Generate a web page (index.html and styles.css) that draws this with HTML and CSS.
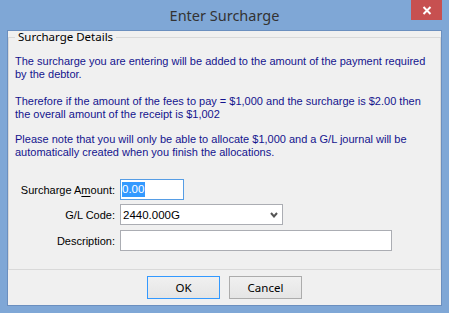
FILE: index.html
```html
<!DOCTYPE html>
<html>
<head>
<meta charset="utf-8">
<link rel="stylesheet" href="styles.css">
</head>
<body>
<div class="window">
  <div class="titlebar">
    <div class="tb-left"></div>
    <div class="title">Enter Surcharge</div>
    <div class="tb-right">
      <div class="close">
        <svg width="10" height="9" viewBox="0 0 10 9"><path d="M1.5 1 L8.5 8 M8.5 1 L1.5 8" stroke="#fff" stroke-width="2" fill="none"/></svg>
      </div>
    </div>
  </div>
  <div class="client">
    <fieldset class="group">
      <legend class="group-title">Surcharge Details</legend>
      <p class="msg m1">The surcharge you are entering will be added to the amount of the payment required<br>by the debtor.</p>
      <p class="msg m2">Therefore if the amount of the fees to pay = $1,000 and the surcharge is $2.00 then<br>the overall amount of the receipt is $1,002</p>
      <p class="msg m3">Please note that you will only be able to allocate $1,000 and a G/L journal will be<br>automatically created when you finish the allocations.</p>
      <div class="form">
        <div class="row">
          <span class="label">Surcharge A<u>m</u>ount:</span>
          <div class="field amount focused"><span class="sel">0.00</span></div>
        </div>
        <div class="row r2">
          <span class="label">G/L Code:</span>
          <div class="field combo"><span class="val">2440.000G</span>
            <svg class="chev" width="8" height="6" viewBox="0 0 8 6"><path d="M1 1 L4 4.5 L7 1" stroke="#555" stroke-width="2" fill="none"/></svg>
          </div>
        </div>
        <div class="row r3">
          <span class="label">Description:</span>
          <div class="field desc"></div>
        </div>
      </div>
    </fieldset>
    <div class="buttons">
      <button class="btn default">OK</button>
      <button class="btn">Cancel</button>
    </div>
  </div>
</div>
</body>
</html>
```
FILE: styles.css
```css
html, body {
  margin: 0;
  padding: 0;
}
body {
  width: 449px;
  height: 313px;
  overflow: hidden;
  background: #7fa7d6;
}
.window {
  width: 449px;
  height: 313px;
  box-sizing: border-box;
  background: #7fa7d6;
  display: flex;
  flex-direction: column;
}
.titlebar {
  height: 30px;
  flex: none;
  display: grid;
  grid-template-columns: 1fr auto 1fr;
}
.title {
  align-self: center;
  font-family: "Noto Sans", sans-serif;
  font-size: 14.5px;
  color: #333;
  line-height: 30px;
}
.tb-right {
  display: flex;
  justify-content: flex-end;
  align-items: flex-start;
}
.close {
  width: 31px;
  height: 20px;
  margin-right: 7px;
  background: #c75050;
  display: flex;
  align-items: center;
  justify-content: center;
}
.client {
  margin-left: 7px;
  width: 435px;
  height: 276px;
  box-sizing: border-box;
  border: 1px solid #6b8fbf;
  background: #f0f0f0;
  display: flex;
  flex-direction: column;
}
.group {
  flex: 1 1 auto;
  min-height: 0;
  margin: 0;
  padding: 12px 6px 0 6px;
  border: 1px solid #d9d9d9;
  min-width: 0;
}
.group-title {
  padding: 0 3px;
  font-family: "Noto Sans", sans-serif;
  font-size: 11.5px;
  line-height: 12px;
  color: #000;
}
.msg {
  margin: 0;
  font-family: "Liberation Sans", Arial, sans-serif;
  font-size: 11px;
  line-height: 13px;
  color: #14148e;
  white-space: nowrap;
}
.m2 { margin-top: 14px; }
.m3 { margin-top: 12px; }
.form {
  margin-top: 20px;
  display: flex;
  flex-direction: column;
}
.row {
  display: flex;
  align-items: center;
  height: 21px;
}
.r2 { margin-top: 4px; }
.r3 { margin-top: 5px; }
.label {
  width: 100px;
  margin-right: 5px;
  text-align: right;
  font-family: "Liberation Sans", Arial, sans-serif;
  font-size: 11px;
  color: #000;
  white-space: nowrap;
}
.label u {
  text-decoration-thickness: 1px;
  text-underline-offset: 2px;
}
.field {
  height: 21px;
  box-sizing: border-box;
  background: #fff;
  border: 1px solid #abadb3;
  display: flex;
  align-items: center;
  font-family: "Liberation Sans", Arial, sans-serif;
  font-size: 11.5px;
  color: #000;
}
.amount {
  width: 64px;
  padding-left: 1px;
}
.focused {
  border-color: #569de5;
}
.sel {
  background: #3399ff;
  color: #fff;
  line-height: 15px;
  padding: 0 1px 0 0;
}
.combo {
  width: 163px;
  padding-left: 2px;
  justify-content: space-between;
}
.chev {
  margin-right: 4px;
  margin-top: 1px;
}
.desc {
  width: 272px;
}
.buttons {
  flex: none;
  height: 35px;
  box-sizing: border-box;
  padding-top: 6px;
  display: flex;
  justify-content: center;
  align-items: flex-start;
  gap: 9px;
}
.btn {
  width: 73px;
  height: 23px;
  box-sizing: border-box;
  margin: 0;
  padding: 0;
  border: 1px solid #acacac;
  border-radius: 0;
  background: linear-gradient(#f0f0f0, #e5e5e5);
  font-family: "Noto Sans", sans-serif;
  font-size: 11.5px;
  color: #000;
}
.btn.default {
  border-color: #3399ff;
}
```
